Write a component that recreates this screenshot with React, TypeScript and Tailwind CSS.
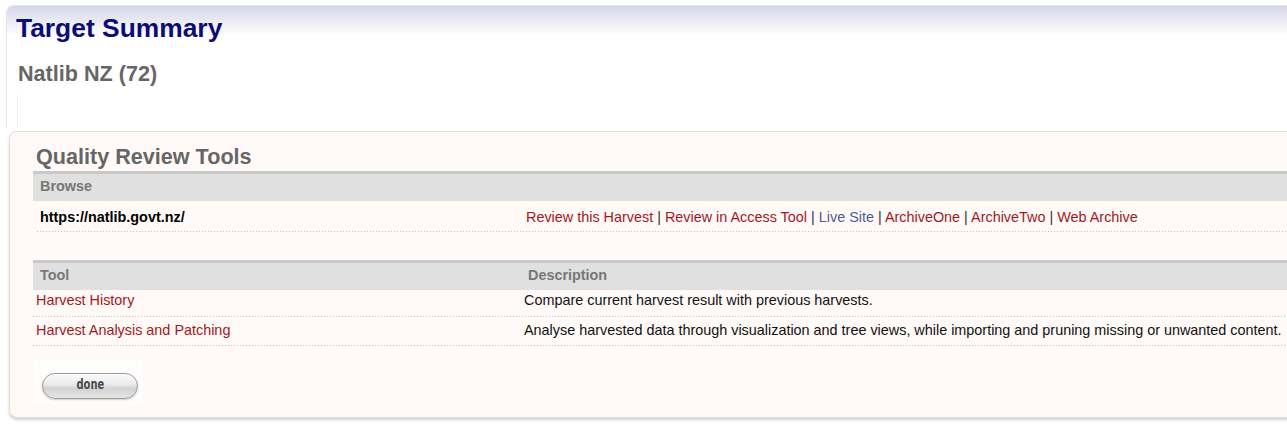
const browseLinks = [
  { label: "Review this Harvest", tone: "red" },
  { label: "Review in Access Tool", tone: "red" },
  { label: "Live Site", tone: "blue" },
  { label: "ArchiveOne", tone: "red" },
  { label: "ArchiveTwo", tone: "red" },
  { label: "Web Archive", tone: "red" },
];

const tools = [
  {
    name: "Harvest History",
    desc: "Compare current harvest result with previous harvests.",
    row: "h-[26px] pt-[2px]",
  },
  {
    name: "Harvest Analysis and Patching",
    desc: "Analyse harvested data through visualization and tree views, while importing and pruning missing or unwanted content.",
    row: "h-[28px] pt-[5px]",
  },
];

const Dots = () => (
  <div className="h-px bg-[linear-gradient(to_right,#c2c2c2_1px,transparent_1px)] bg-[length:3px_1px] bg-repeat-x" />
);

const HeadBar = ({ children }: { children: React.ReactNode }) => (
  <div className="h-[30px] border-t-[3px] border-[#c9c9c9] bg-[#e0e0e0] pt-[4px] text-[14.4px] font-bold leading-[16px] text-[#777]">
    {children}
  </div>
);

export default function App() {
  return (
    <div className="h-[432px] w-[1287px] overflow-hidden bg-white pt-[5px] font-['Liberation_Sans',Arial,sans-serif]">
      {/* Page header */}
      <div className="ml-[6px] rounded-tl-[8px] border-l border-t border-[#e4e4ee] bg-[linear-gradient(to_bottom,#d6d6ea,#ffffff_30px)]">
        <h1 className="pl-[9px] pt-[8px] text-[26.4px] font-bold leading-[29px] text-[#0c0c78]">
          Target Summary
        </h1>
        <h2 className="mt-[18px] pl-[11px] text-[21.6px] font-bold leading-[25px] text-[#666]">
          Natlib NZ (72)
        </h2>
        <div className="ml-[10px] mt-[9px] h-[33px] border-l border-[#efefef]" />
      </div>

      {/* Quality review panel */}
      <div className="ml-[9px] mt-[3px] w-[1330px] rounded-[8px] border border-[#e3dfdd] bg-[#fffaf7] pb-[12px] pl-[23px] pt-[12px] shadow-[0_2px_3px_rgba(0,0,0,0.18)]">
        <h3 className="pl-[3px] text-[21.6px] font-bold leading-[25px] text-[#666]">
          Quality Review Tools
        </h3>

        <div className="mt-[2px]">
          <HeadBar>
            <span className="pl-[7px]">Browse</span>
          </HeadBar>
          <div className="ml-[4px]">
            <div className="grid h-[30px] grid-cols-[489px_1fr] pt-[8px] text-[14.4px] leading-[16px]">
              <span className="pl-[3px] font-bold text-black">https://natlib.govt.nz/</span>
              <span className="whitespace-nowrap text-[#333]">
                {browseLinks.map((l, i) => (
                  <span key={l.label}>
                    {i > 0 && " | "}
                    <a className={l.tone === "blue" ? "text-[#4b5a98]" : "text-[#a3181c]"}>{l.label}</a>
                  </span>
                ))}
              </span>
            </div>
            <Dots />
          </div>
        </div>

        <div className="mt-[28px]">
          <HeadBar>
            <div className="grid grid-cols-[495px_1fr]">
              <span className="pl-[7px]">Tool</span>
              <span>Description</span>
            </div>
          </HeadBar>
          {tools.map((t) => (
            <div key={t.name}>
              <div className={`grid grid-cols-[491px_1fr] text-[14.4px] leading-[16px] ${t.row}`}>
                <a className="pl-[3px] text-[#a3181c]">{t.name}</a>
                <span className="whitespace-nowrap text-[#111]">{t.desc}</span>
              </div>
              <Dots />
            </div>
          ))}
        </div>

        <div className="mt-[15px] w-[110px] bg-[#fffefd] pb-[6px] pl-[9px] pt-[12px]">
          <button className="flex h-[26px] w-[96px] items-center justify-center rounded-full border border-[#9b9b9b] bg-[linear-gradient(to_bottom,#fbfbfb,#e9e9e9_45%,#d2d2d2_60%,#e6e6e6)] pb-[2px] shadow-[0_1px_2px_rgba(0,0,0,0.2),inset_0_1px_0_#fff] font-['DejaVu_Sans',sans-serif] text-[13px] font-bold text-[#4a4a4a] [font-stretch:condensed]">
            <span className="inline-block scale-x-[0.85] scale-y-[1.1]">done</span>
          </button>
        </div>
      </div>
    </div>
  );
}
